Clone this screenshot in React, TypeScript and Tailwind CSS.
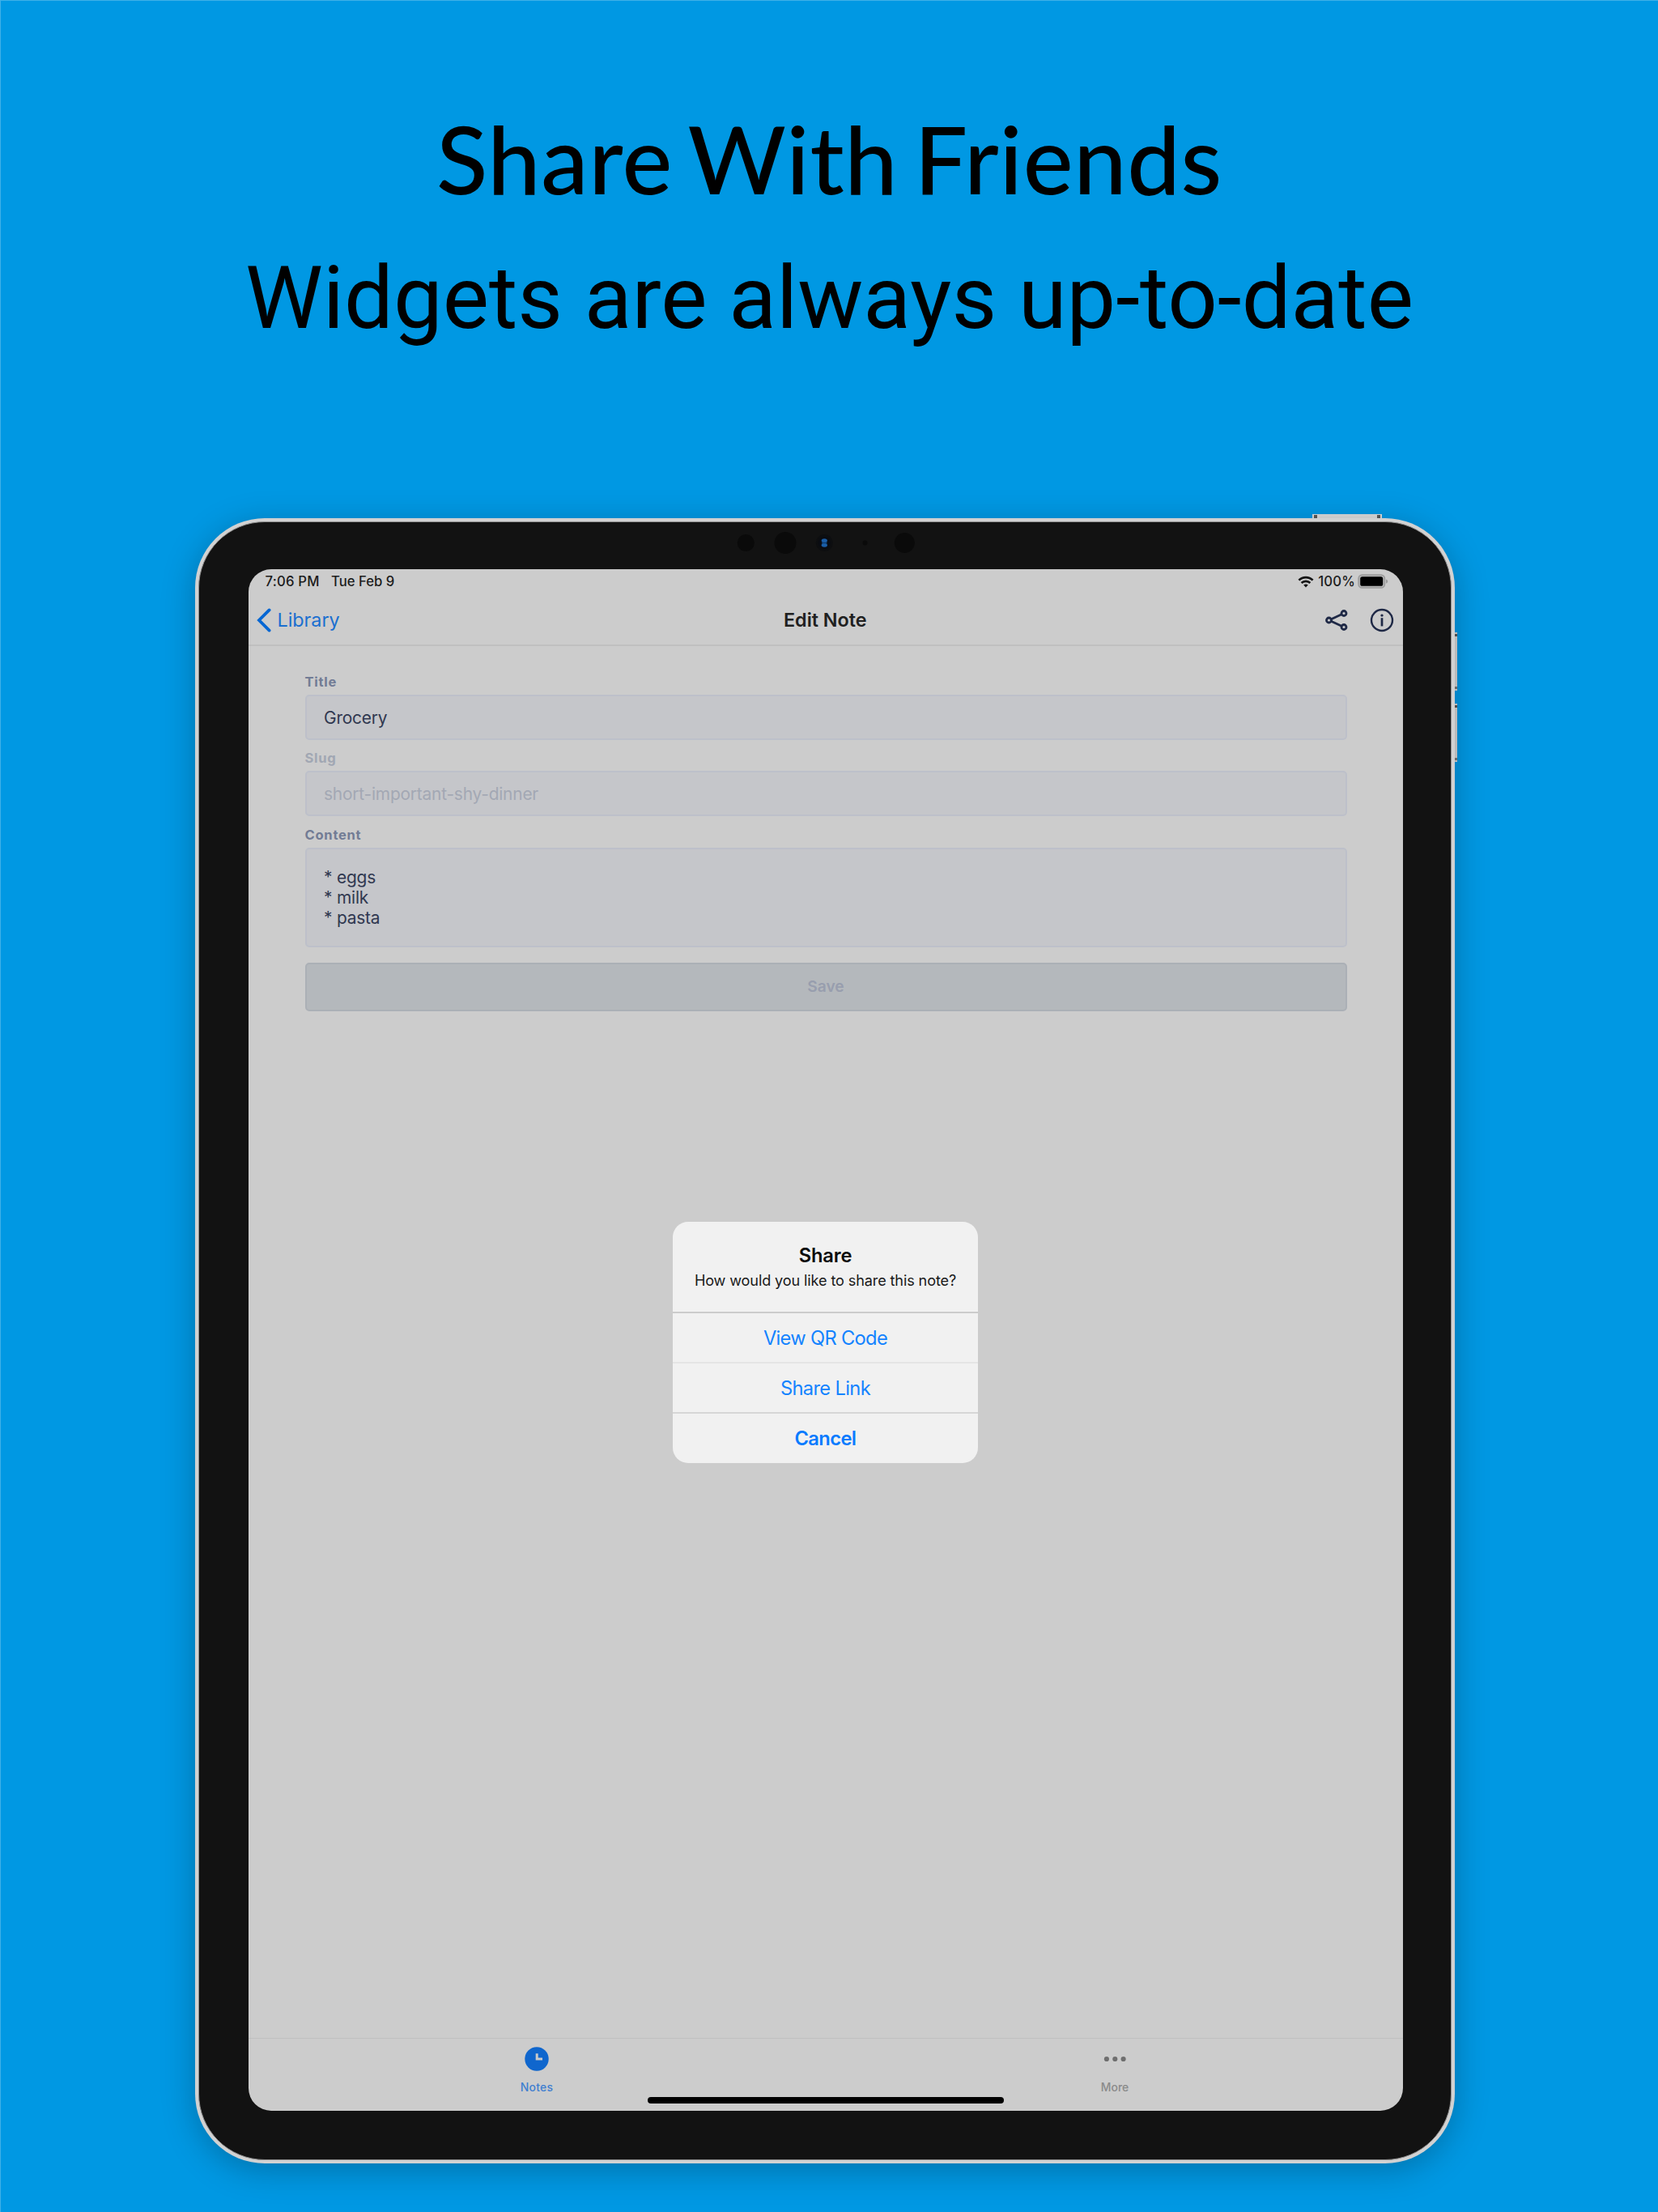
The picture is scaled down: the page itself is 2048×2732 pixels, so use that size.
function BackChevron() {
  return (
    <svg className="h-[30px] w-[18px]" viewBox="0 0 18 30" fill="none" stroke="#0567d3" strokeWidth="3.8">
      <path d="M15.6 2.4 3 15l12.6 12.6" strokeLinecap="round" strokeLinejoin="miter" />
    </svg>
  );
}

function WifiIcon() {
  return (
    <svg className="h-[15px] w-[20px]" viewBox="0 0 20 15" fill="none" stroke="#151515" strokeWidth="2.7">
      <path d="M1.4 5.6a12.2 12.2 0 0 1 17.2 0" />
      <path d="M4.6 9a7.7 7.7 0 0 1 10.8 0" />
      <path d="M10 14.4 7.2 11.6a3.9 3.9 0 0 1 5.6 0Z" fill="#151515" stroke="none" />
    </svg>
  );
}

function BatteryIcon() {
  return (
    <svg className="h-[18px] w-[38px]" viewBox="0 0 38 18">
      <rect x="1" y="1" width="32.5" height="16" rx="4.6" fill="#b3b3b3" stroke="#9a9a9a" strokeWidth="1.4" />
      <rect x="3.2" y="3.2" width="28" height="11.6" rx="2.6" fill="#000" />
      <path d="M35 6.4c1.6.5 2.2 1.4 2.2 2.6s-.6 2.1-2.2 2.6Z" fill="#9a9a9a" />
    </svg>
  );
}

function ShareIcon() {
  return (
    <svg className="h-[26px] w-[28px]" viewBox="0 0 28 26" fill="none" stroke="#1f2946" strokeWidth="2.8">
      <circle cx="4.5" cy="13" r="3" />
      <circle cx="23" cy="4.5" r="3" />
      <circle cx="23" cy="21.5" r="3" />
      <path d="M7.3 11.7 20.2 5.8M7.3 14.3l12.9 5.9" />
    </svg>
  );
}

function InfoIcon() {
  return (
    <svg className="h-[30px] w-[30px]" viewBox="0 0 30 30" fill="none">
      <circle cx="15" cy="15" r="13" stroke="#1f2946" strokeWidth="2.4" />
      <circle cx="15" cy="9.1" r="1.7" fill="#1f2946" />
      <path d="M15 12.2v10.2" stroke="#1f2946" strokeWidth="2.7" />
    </svg>
  );
}

function ClockIcon() {
  return (
    <svg className="h-[30px] w-[30px]" viewBox="0 0 30 30" fill="none">
      <circle cx="15" cy="15" r="14.7" fill="#0f66cd" />
      <path d="M15.2 8.3v6.7h6.8" stroke="#cacaca" strokeWidth="3" />
    </svg>
  );
}

function MoreIcon() {
  return (
    <svg className="h-[30px] w-[30px]" viewBox="0 0 30 30" fill="#6e6e6e">
      <circle cx="4.9" cy="15" r="3.1" />
      <circle cx="15.3" cy="15" r="3.1" />
      <circle cx="25.6" cy="15" r="3.1" />
    </svg>
  );
}

function Sensors() {
  return (
    <svg className="absolute left-[666px] top-[15px] h-[32px] w-[224px]" viewBox="0 0 224 32">
      <circle cx="14.3" cy="15.5" r="10.5" fill="#0a0a0a" />
      <circle cx="63" cy="15.5" r="13.5" fill="#0a0a0a" />
      <circle cx="111.3" cy="15.5" r="10.5" fill="#0d0e10" />
      <circle cx="111.3" cy="15.5" r="7.5" fill="#0a0c12" />
      <ellipse cx="111.3" cy="12.8" rx="3.6" ry="2.5" fill="#1a5ea8" />
      <ellipse cx="111.3" cy="18.2" rx="3.6" ry="2.5" fill="#1a5ea8" />
      <rect x="108" y="14.8" width="6.6" height="1.4" fill="#0e3a6c" />
      <circle cx="161.5" cy="15.5" r="3" fill="#0a0a0a" />
      <circle cx="210.3" cy="15.5" r="12.5" fill="#0a0a0a" />
    </svg>
  );
}

function StatusBar() {
  return (
    <div className="flex h-[31px] items-center justify-between pl-[20.5px] pr-[18px] text-[16.7px] font-medium text-[#1c1c1c]">
      <div className="flex">
        <span className="w-[81.5px] tracking-[0.2px]">7:06 PM</span>
        <span>Tue Feb 9</span>
      </div>
      <div className="flex items-center">
        <WifiIcon />
        <span className="ml-[5px] tracking-[0.2px]">100%</span>
        <span className="ml-[3px]">
          <BatteryIcon />
        </span>
      </div>
    </div>
  );
}

function NavBar() {
  return (
    <div className="grid h-[64px] grid-cols-3 items-center border-b-2 border-[#c0c0c0] pl-[9.5px] pr-[11px] pt-[2px] text-[23.3px]">
      <div className="flex items-center text-[#1a6fd0]">
        <BackChevron />
        <span className="ml-[8px]">Library</span>
      </div>
      <h2 className="text-center font-semibold text-[#202020]">Edit Note</h2>
      <div className="flex items-center justify-end gap-[27px]">
        <ShareIcon />
        <InfoIcon />
      </div>
    </div>
  );
}

function Label({ text, muted }: { text: string; muted?: boolean }) {
  return (
    <div
      className={
        "mb-[6px] h-[20px] text-[16.6px] font-bold leading-[20px] tracking-[0.7px] " +
        (muted ? "text-[#a1a7b3]" : "text-[#727c95]")
      }
    >
      {text}
    </div>
  );
}

function Form() {
  return (
    <div className="grow pl-[69.5px] pr-[69.5px] pt-[34px] text-[20.9px] tracking-[-0.2px]">
      <Label text="Title" />
      <div className="mb-[12.3px] flex h-[56px] items-center rounded-[5px] border-2 border-[#bdc0ca] bg-[#c5c6ca] pl-[21.5px] pt-px text-[#303850]">
        Grocery
      </div>
      <Label text="Slug" muted />
      <div className="mb-[12.3px] flex h-[56px] items-center rounded-[5px] border-2 border-[#bdc0ca] bg-[#c5c6ca] pl-[21.5px] pt-px text-[#a3a8b4]">
        short-important-shy-dinner
      </div>
      <Label text="Content" />
      <div className="h-[123px] rounded-[5px] border-2 border-[#bdc0ca] bg-[#c5c6ca] pl-[21.5px] pt-[22px] leading-[25.3px] text-[#303850]">
        <p>* eggs</p>
        <p>* milk</p>
        <p>* pasta</p>
      </div>
      <div className="mt-[19px] flex h-[60px] items-center justify-center rounded-[5px] border-2 border-[#abb0b6] bg-[#b4b8bc] text-[19.2px] font-semibold tracking-normal text-[#989eae]">
        Save
      </div>
    </div>
  );
}

function TabBar() {
  return (
    <div className="flex h-[90px] border-t border-[#c0c0c0] pt-[10px] text-[13.9px] font-medium">
      <div className="flex flex-1 flex-col items-center pr-[2px]">
        <ClockIcon />
        <span className="mt-[9.5px] leading-[20px] tracking-[0.3px] text-[#3f7fd0]">Notes</span>
      </div>
      <div className="flex flex-1 flex-col items-center">
        <MoreIcon />
        <span className="mt-[9.5px] leading-[20px] text-[#8a8a8a]">More</span>
      </div>
    </div>
  );
}

function ShareDialog() {
  return (
    <div className="absolute left-[524px] top-[806px] flex h-[298px] w-[377px] flex-col overflow-hidden rounded-[19px] bg-[#f1f1f1] text-center text-[23.7px] text-[#1483ff]">
      <div className="h-[113px] border-b-2 border-[#cccccc] pt-[27px]">
        <h3 className="leading-[30px] font-semibold tracking-[-0.2px] text-[#0c0c0c]">Share</h3>
        <p className="text-[18.1px] leading-[30px] tracking-[-0.12px] text-[#1a1a1a]">How would you like to share this note?</p>
      </div>
      <div className="h-[62px] border-b-2 border-[#e5e5e5] leading-[61px] tracking-[-0.68px]">View QR Code</div>
      <div className="h-[62px] border-b-2 border-[#d6d6d6] leading-[61px] tracking-[-0.65px]">Share Link</div>
      <div className="h-[61px] leading-[62px] font-semibold tracking-[-0.6px] text-[#087bff]">Cancel</div>
    </div>
  );
}

export default function App() {
  return (
    <div className="flex h-[2732px] w-[2048px] flex-col items-center overflow-hidden border-l border-t border-[#40b0e8] bg-[#0098e3] pt-[124px] font-['Inter',sans-serif]">
      <h1 className="font-['Lato',sans-serif] text-[116.8px] font-medium leading-[140px] tracking-[0.7px] text-black [word-spacing:-10.4px]">Share With Friends</h1>
      <p className="mt-[40px] font-['Roboto',sans-serif] text-[108px] leading-[126px] text-black">Widgets are always up-to-date</p>

      <div className="relative mt-[209px] mr-[12px] h-[2032px] w-[1556px] shrink-0">
        <div className="absolute left-[1380px] top-[-5px] flex h-[8px] w-[86px] justify-between bg-[#dcdcdc] px-[2px] pt-px">
          <span className="w-[4px] bg-[#5a5a5a]" />
          <span className="w-[4px] bg-[#5a5a5a]" />
        </div>
        <div className="absolute right-[-3px] top-[141px] flex h-[72px] w-[5px] flex-col justify-between bg-[#d4d4d4] py-[2px]">
          <span className="h-[3px] bg-[#5a5a5a]" />
          <span className="h-[3px] bg-[#7a7a7a]" />
        </div>
        <div className="absolute right-[-3px] top-[229px] flex h-[72px] w-[5px] flex-col justify-between bg-[#d4d4d4] py-[2px]">
          <span className="h-[3px] bg-[#5a5a5a]" />
          <span className="h-[3px] bg-[#7a7a7a]" />
        </div>

        <div className="relative h-full w-full rounded-[86px] bg-[#d2d2d2] p-[4px] shadow-[0_8px_40px_rgba(0,0,0,0.25)]">
          <div className="h-full w-full rounded-[82px] border border-[#8c8c8c] bg-[#121212] pl-[61.5px] pr-[58.5px] pt-[58px] pb-[60px]">
            <div className="relative flex h-full w-full flex-col overflow-hidden rounded-[28px] bg-[#cccccc]">
              <StatusBar />
              <NavBar />
              <Form />
              <TabBar />
              <div className="absolute bottom-[9px] left-[493px] h-[8px] w-[440px] rounded-full bg-black" />
              <ShareDialog />
            </div>
          </div>
          <Sensors />
        </div>
      </div>
    </div>
  );
}
